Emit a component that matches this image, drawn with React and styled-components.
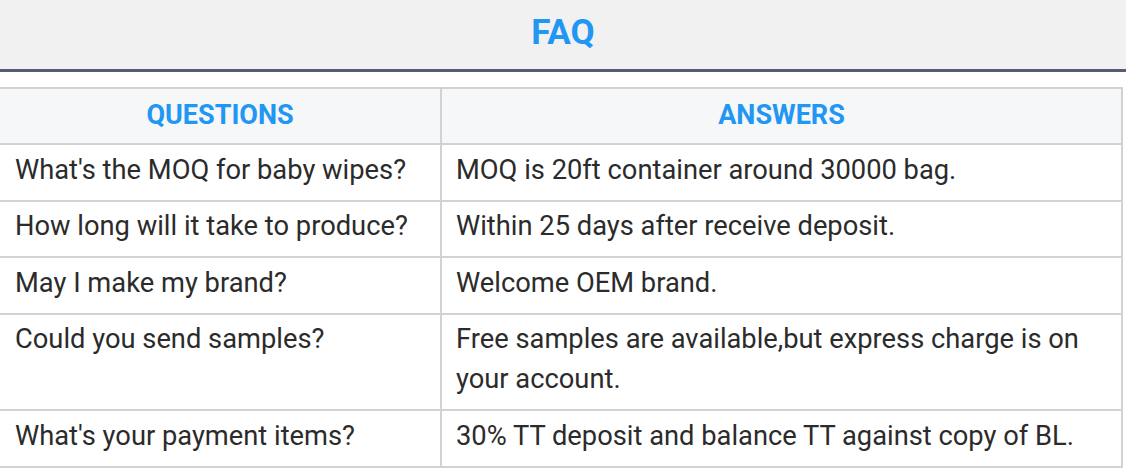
import React from "react";
import styled, { createGlobalStyle } from "styled-components";

const Global = createGlobalStyle`
  html, body { margin: 0; padding: 0; background: #ffffff; }
  body { font-family: Roboto, "Liberation Sans", Arial, sans-serif; overflow: hidden; }
`;

const Page = styled.div`
  width: 1126px;
  height: 472px;
  overflow: hidden;
  background: #ffffff;
`;

const TitleBar = styled.header`
  box-sizing: border-box;
  height: 72px;
  padding-bottom: 5px;
  background: #f1f1f1;
  border-bottom: 3px solid #545e70;
  display: flex;
  align-items: center;
  justify-content: center;
`;

const Title = styled.h2`
  margin: 0;
  font-size: 35px;
  font-weight: 700;
  color: #2196f3;
  line-height: 1;
`;

const Table = styled.table`
  margin: 15px 0 0 -2px;
  width: 1125px;
  table-layout: fixed;
  border-collapse: separate;
  border-spacing: 0;
  border-top: 2px solid #d2d2d2;
  border-left: 2px solid #d2d2d2;
  font-size: 27.3px;
`;

const HeadCell = styled.th`
  background: #f6f7f9;
  color: #2196f3;
  font-weight: 700;
  font-size: 27px;
  text-align: center;
  line-height: 40px;
  padding: 6px 15px 8px;
  border-right: 2px solid #d2d2d2;
  border-bottom: 2px solid #d2d2d2;
`;

const Cell = styled.td`
  color: #2b2b2b;
  font-weight: 400;
  line-height: 40px;
  padding: 4.5px 14px 10px ${(p) => (p.$first ? "15px" : "14px")};
  vertical-align: top;
  border-right: 2px solid #d2d2d2;
  border-bottom: 2px solid #d2d2d2;
`;

const rows = [
  ["What's the MOQ for baby wipes?", "MOQ is 20ft container around 30000 bag."],
  ["How long will it take to produce?", "Within 25 days after receive deposit."],
  ["May I make my brand?", "Welcome OEM brand."],
  ["Could you send samples?", "Free samples are available,but express charge is on your account."],
  ["What's your payment items?", "30% TT deposit and balance TT against copy of BL."],
];

export default function App() {
  return (
    <Page>
      <Global />
      <TitleBar>
        <Title>FAQ</Title>
      </TitleBar>
      <Table>
        <colgroup>
          <col style={{ width: "442px" }} />
          <col style={{ width: "681px" }} />
        </colgroup>
        <thead>
          <tr>
            <HeadCell>QUESTIONS</HeadCell>
            <HeadCell>ANSWERS</HeadCell>
          </tr>
        </thead>
        <tbody>
          {rows.map(([q, a]) => (
            <tr key={q}>
              <Cell $first>{q}</Cell>
              <Cell>{a}</Cell>
            </tr>
          ))}
        </tbody>
      </Table>
    </Page>
  );
}
